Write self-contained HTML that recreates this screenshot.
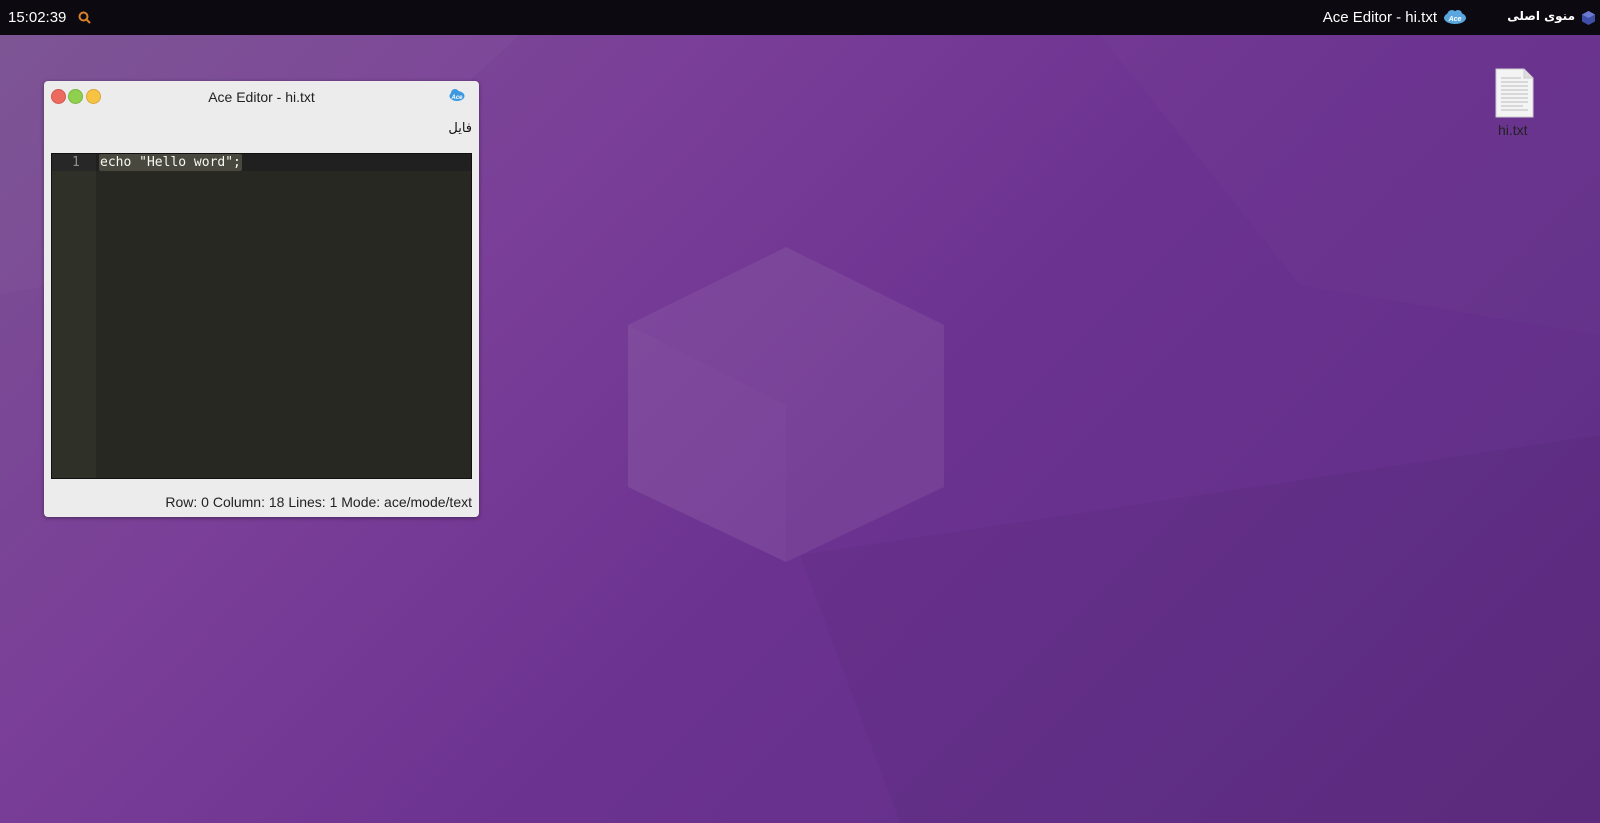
<!DOCTYPE html>
<html><head><meta charset="utf-8"><style>
*{margin:0;padding:0;box-sizing:border-box}
body{width:1600px;height:823px;overflow:hidden;position:relative;font-family:"Liberation Sans","Noto Sans CJK SC",sans-serif;
background:linear-gradient(135deg,#7a5292 0%,#7a3f98 30%,#6c3290 55%,#63308a 80%,#5e2c80 100%)}
.top{position:absolute;left:0;top:0;width:1600px;height:35px;background:#0c0910;color:#fff;font-size:14px}
.win{position:absolute;left:44px;top:81px;width:435px;height:436px;background:#ececec;border-radius:4px;box-shadow:0 1px 4px rgba(0,0,0,.4)}
.dot{position:absolute;top:8px;width:15px;height:15px;border-radius:50%}
.ed{position:absolute;left:7px;top:72px;width:421px;height:326px;background:#272822;border:1px solid #111}
.gut{position:absolute;left:0;top:0;width:44px;height:100%;background:#2f3129}
.mono{font-family:"DejaVu Sans Mono","Liberation Mono",monospace;font-size:13px}
</style></head><body>
<svg style="position:absolute;left:0;top:35px" width="1600" height="788">
<polygon points="0,0 520,0 300,200 0,260" fill="rgba(255,255,255,0.025)"/>
<polygon points="1100,0 1600,0 1600,300 1300,250" fill="rgba(255,255,255,0.015)"/>
<polygon points="800,520 1600,400 1600,788 900,788" fill="rgba(0,0,0,0.03)"/>
<polygon points="786,212 944,290 944,452 786,527 628,452 628,290" fill="rgba(255,255,255,0.07)"/>
<polygon points="628,290 786,370 786,527 628,452" fill="rgba(255,255,255,0.02)"/>
</svg>
<div class="top">
<div style="position:absolute;left:8px;top:9px;font-size:15px">15:02:39</div>
<svg style="position:absolute;left:78px;top:11px" width="13" height="13"><circle cx="5.5" cy="5.5" r="4" fill="none" stroke="#d9822b" stroke-width="2"/><line x1="8.5" y1="8.5" x2="12" y2="12" stroke="#d9822b" stroke-width="2"/></svg>
<div style="position:absolute;right:163px;top:9px;font-size:15px;white-space:nowrap">Ace Editor - hi.txt</div>
<svg style="position:absolute;left:1443px;top:9px" width="24" height="16"><ellipse cx="12" cy="9" rx="11" ry="6" fill="#5aa7e0"/><circle cx="9" cy="6" r="5" fill="#5aa7e0"/><circle cx="15" cy="5" r="4" fill="#5aa7e0"/><text x="12" y="12" font-size="7" fill="#fff" text-anchor="middle" font-style="italic" font-weight="bold">Ace</text></svg>
<div style="position:absolute;right:25px;top:9px;font-size:12px;font-weight:bold;direction:rtl;white-space:nowrap;font-family:'DejaVu Sans',sans-serif">منوی اصلی</div>
<svg style="position:absolute;left:1581px;top:10px" width="15" height="16"><polygon points="7.5,1 14,4.5 14,11.5 7.5,15 1,11.5 1,4.5" fill="#3f4fa8"/><polygon points="7.5,1 14,4.5 7.5,8 1,4.5" fill="#6a7ad0"/></svg>
</div>
<div class="win">
<div class="dot" style="left:7px;background:#ec6a5e;border:1px solid #d05a50"></div>
<div class="dot" style="left:24px;background:#8fd14f;border:1px solid #78b540"></div>
<div class="dot" style="left:42px;background:#f6c343;border:1px solid #dba73a"></div>
<div style="position:absolute;left:0;width:100%;top:8px;text-align:center;font-size:14px;color:#222">Ace Editor - hi.txt</div>
<svg style="position:absolute;left:405px;top:7px" width="16" height="14"><ellipse cx="8" cy="8" rx="7.5" ry="5" fill="#3d98e0"/><circle cx="6" cy="5" r="4" fill="#3d98e0"/><text x="8" y="11" font-size="6" fill="#fff" text-anchor="middle" font-weight="bold" font-style="italic">Ace</text></svg>
<div style="position:absolute;right:7px;top:40px;font-size:13px;color:#111;font-family:'DejaVu Sans',sans-serif">فایل</div>
<div class="ed">
<div class="gut"></div>
<div style="position:absolute;left:0;top:0;width:100%;height:17px;background:#202020"></div>
<div style="position:absolute;left:0;top:0;width:44px;height:17px;background:#272727"></div>
<div class="mono" style="position:absolute;left:20px;top:1px;color:#8f908a">1</div>
<div class="mono" style="position:absolute;left:47px;top:0;height:17px;padding:1px 1px 0;background:#49483e;color:#f8f8f2;border-radius:2px">echo "Hello word";</div>
</div>
<div style="position:absolute;right:7px;top:413px;font-size:14px;color:#222">Row: 0 Column: 18 Lines: 1 Mode: ace/mode/text</div>
</div>
<svg style="position:absolute;left:1495px;top:68px" width="40" height="50"><path d="M1,1 H29 L38,10 V49 H1 Z" fill="#f4f4f4" stroke="#ccc"/><path d="M29,1 V10 H38" fill="#ddd" stroke="#ccc"/>
<g stroke="#bbb" stroke-width="1"><line x1="6" y1="10" x2="26" y2="10"/><line x1="6" y1="14" x2="33" y2="14"/><line x1="6" y1="18" x2="33" y2="18"/><line x1="6" y1="22" x2="33" y2="22"/><line x1="6" y1="26" x2="33" y2="26"/><line x1="6" y1="30" x2="33" y2="30"/><line x1="6" y1="34" x2="33" y2="34"/><line x1="6" y1="38" x2="28" y2="38"/><line x1="6" y1="42" x2="33" y2="42"/></g></svg>
<div style="position:absolute;left:1498px;top:122px;font-size:14px;color:#222">hi.txt</div>
</body></html>
